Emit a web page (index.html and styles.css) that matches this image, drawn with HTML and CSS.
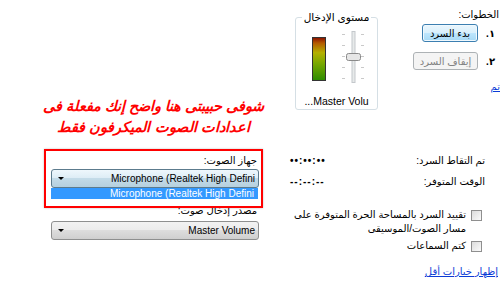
FILE: index.html
```html
<!DOCTYPE html>
<html lang="ar" dir="rtl">
<head>
    <meta charset="UTF-8">
    <meta name="viewport" content="width=device-width, initial-scale=1.0">
    <title>مسجل الصوت</title>
    <link rel="stylesheet" href="styles.css">
</head>
<body>
    <div class="page">
        <div class="col-right">
            <div class="top">
                <div class="steps">
                    <div class="steps-title">الخطوات:</div>
                    <div class="step">
                        <span class="num">١.</span>
                        <button class="btn btn-focus">بدء السرد</button>
                    </div>
                    <div class="step">
                        <span class="num">٢.</span>
                        <button class="btn btn-wide" disabled>إيقاف السرد</button>
                    </div>
                    <a class="link done" href="#">تم</a>
                </div>
                <fieldset class="level">
                    <legend>مستوى الإدخال</legend>
                    <div class="level-body">
                        <div class="meter"></div>
                        <svg class="slider" width="26" height="54" viewBox="0 0 26 54">
                            <g stroke="#c9c9c9" stroke-width="1">
                                <line x1="2" y1="3.5" x2="5" y2="3.5"/>
                                <line x1="2" y1="14.5" x2="5" y2="14.5"/>
                                <line x1="2" y1="25.5" x2="5" y2="25.5"/>
                                <line x1="2" y1="36.5" x2="5" y2="36.5"/>
                                <line x1="2" y1="47.5" x2="5" y2="47.5"/>
                                <line x1="21" y1="3.5" x2="24" y2="3.5"/>
                                <line x1="21" y1="14.5" x2="24" y2="14.5"/>
                                <line x1="21" y1="25.5" x2="24" y2="25.5"/>
                                <line x1="21" y1="36.5" x2="24" y2="36.5"/>
                                <line x1="21" y1="47.5" x2="24" y2="47.5"/>
                            </g>
                            <rect x="12" y="0.5" width="3" height="51" fill="#e7eaea" stroke="#c4c8cc" stroke-width="1"/>
                            <rect x="6.5" y="22.5" width="14" height="7" rx="2" fill="#e6e6e6" stroke="#8a8a8a"/>
                        </svg>
                    </div>
                    <div class="level-name">Master Volu...</div>
                </fieldset>
            </div>
            <div class="info">
                <div class="info-row">
                    <span>تم التقاط السرد:</span>
                    <span class="val">••:••:••</span>
                </div>
                <div class="info-row">
                    <span>الوقت المتوفر:</span>
                    <span class="val">--:--:--</span>
                </div>
            </div>
            <div class="checks">
                <label class="check">
                    <span class="box"></span>
                    <span class="check-text">تقييد السرد بالمساحة الحرة المتوفرة على مسار الصوت/الموسيقى</span>
                </label>
                <label class="check">
                    <span class="box"></span>
                    <span class="check-text">كتم السماعات</span>
                </label>
            </div>
            <a class="link more" href="#">إظهار خيارات أقل</a>
        </div>
        <div class="col-left">
            <p class="note">شوفى حبيبتى هنا واضح إنك مفعلة فى<br>اعدادات الصوت الميكرفون فقط</p>
            <div class="highlight">
                <div class="field-label">جهاز الصوت:</div>
                <div class="combo combo-open">
                    <span class="combo-text">Microphone (Realtek High Defini</span>
                    <span class="arrow"></span>
                </div>
                <div class="option">Microphone (Realtek High Defini</div>
            </div>
            <div class="field-label source-label">مصدر إدخال صوت:</div>
            <div class="combo combo-source">
                <span class="combo-text">Master Volume</span>
                <span class="arrow"></span>
            </div>
        </div>
    </div>
</body>
</html>
```

FILE: styles.css
```css
body {
    margin: 0;
    padding: 0;
    background: #fff;
    color: #000;
    font-family: "Liberation Sans", "DejaVu Sans", sans-serif;
    font-size: 10px;
    overflow: hidden;
}
.page {
    display: grid;
    grid-template-columns: 220px 280px;
    width: 500px;
    height: 299px;
}

/* right column */
.col-right {
    display: flex;
    flex-direction: column;
}
.top {
    display: flex;
    height: 112px;
}
.steps {
    width: 95px;
    padding-top: 8px;
}
.steps-title {
    line-height: 14px;
    margin-right: 1px;
}
.step {
    display: flex;
    align-items: center;
    margin-top: 2px;
    margin-bottom: 10px;
    padding-right: 5px;
}
.num {
    width: 8px;
    margin-left: 9px;
    font-weight: bold;
}
.btn {
    width: 56px;
    height: 18px;
    padding: 0;
    border: 1px solid #707070;
    border-radius: 3px;
    background: linear-gradient(#f2f2f2, #ebebeb 50%, #dddddd 50%, #cfcfcf);
    font-family: inherit;
    font-size: 10px;
    color: #000;
}
.btn-focus {
    border-color: #3c7fb1;
    background: linear-gradient(#eaf6fd, #d9f0fc 50%, #bee6fd 50%, #a7d9f5);
    box-shadow: inset 0 0 0 1px #f0f9fe;
}
.btn-wide {
    width: 65px;
}
.btn:disabled {
    border-color: #adb2b5;
    background: #f4f4f4;
    color: #838383;
}
.link {
    color: #0b3bd6;
    text-decoration: underline;
}
.done {
    display: block;
    margin-top: 2px;
    line-height: 14px;
}
.level {
    width: 83px;
    height: 100px;
    box-sizing: border-box;
    margin: 10px 27px 0 0;
    padding: 0;
    border: 1px solid #d5dfe5;
    border-radius: 3px;
}
.level legend {
    margin: 0 auto;
    padding: 0 2px;
    line-height: 14px;
    font-size: 10.5px;
}
.level-body {
    display: flex;
    direction: ltr;
    align-items: flex-start;
    padding: 5px 0 0 15px;
    height: 56px;
}
.meter {
    width: 12px;
    height: 42px;
    margin-top: 8px;
    margin-left: 1px;
    border: 1px solid #333;
    background: linear-gradient(#8b1400, #b45a00 12%, #b4b000 35%, #7aa800 60%, #2e8c00);
}
.slider {
    margin-left: 14px;
    margin-top: 2px;
}
.level-name {
    text-align: center;
    margin-top: 9px;
    line-height: 14px;
    font-size: 10.5px;
}
.info {
    margin-top: 38px;
}
.info-row {
    display: flex;
    justify-content: space-between;
    height: 21px;
    line-height: 21px;
    padding: 0 15px 0 10px;
}
.val {
    direction: ltr;
    font-weight: bold;
    letter-spacing: 1px;
}
.checks {
    margin-top: 16px;
}
.check {
    display: flex;
    align-items: flex-start;
    padding-right: 18px;
    margin-bottom: 3px;
}
.box {
    flex: none;
    width: 9px;
    height: 9px;
    margin-top: 2px;
    margin-left: 5px;
    border: 1px solid #8f8f8f;
    background: linear-gradient(135deg, #dcdcdc, #fbfbfb);
}
.check-text {
    width: 180px;
    line-height: 14px;
}
.more {
    margin-top: 9px;
    padding-right: 2px;
    line-height: 14px;
}

/* left column */
.col-left {
    display: flex;
    flex-direction: column;
}
.note {
    margin: 96px 10px 0 37px;
    text-align: center;
    color: #ff0000;
    font-weight: bold;
    font-style: italic;
    font-size: 14.5px;
    line-height: 21px;
}
.highlight {
    position: relative;
    z-index: 1;
    margin: 11px 17px 0 44px;
    padding: 3px 2px 7px 5px;
    border: 2px solid #ff0000;
    box-shadow: 0 0 2px rgba(0,0,0,0.25);
}
.field-label {
    line-height: 14px;
    padding-right: 2px;
}
.combo {
    display: flex;
    align-items: center;
    justify-content: space-between;
    height: 17px;
    padding: 0 3px 0 6px;
    border: 1px solid #8e8f8f;
    border-radius: 3px;
    background: linear-gradient(#f2f2f2, #ebebeb 50%, #dddddd 50%, #cfcfcf);
}
.combo-open {
    margin-top: 1px;
    border-color: #5c7b8d;
    background: linear-gradient(#eef7fc, #dcecf5 50%, #c3dbe8 50%, #b6d0de);
}
.combo-text {
    direction: ltr;
}
.arrow {
    width: 0;
    height: 0;
    border-left: 3px solid transparent;
    border-right: 3px solid transparent;
    border-top: 3px solid #000;
}
.option {
    direction: ltr;
    text-align: right;
    height: 11px;
    line-height: 11px;
    padding-right: 4px;
    margin-right: 1px;
    background: #3399ff;
    color: #fff;
}
.source-label {
    margin: -4px 21px 0 0;
}
.combo-source {
    margin: 3px 21px 0 51px;
}
```
